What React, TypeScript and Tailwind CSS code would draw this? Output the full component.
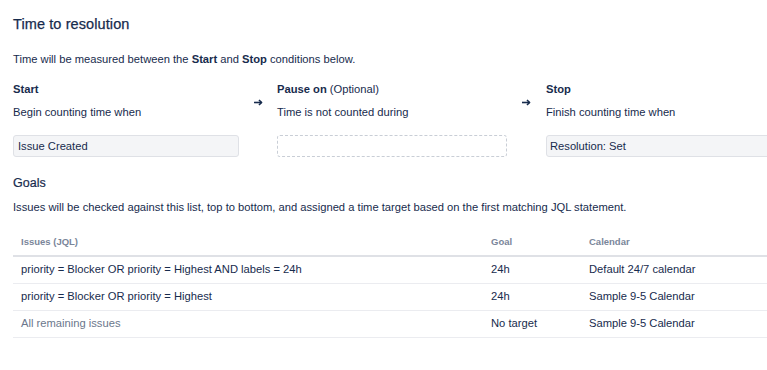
const rows = [
  { jql: "priority = Blocker OR priority = Highest AND labels = 24h", goal: "24h", calendar: "Default 24/7 calendar", muted: false },
  { jql: "priority = Blocker OR priority = Highest", goal: "24h", calendar: "Sample 9-5 Calendar", muted: false },
  { jql: "All remaining issues", goal: "No target", calendar: "Sample 9-5 Calendar", muted: true },
];

function Arrow({ width }: { width: string }) {
  return (
    <div className={`flex h-[39px] shrink-0 items-center justify-center pt-[3px] ${width}`}>
      <svg width="9" height="7" viewBox="0 0 9 7" fill="none" stroke="#172b4d" strokeWidth="1.6">
        <path d="M0 3.5h7.5" />
        <path d="M5 1l2.6 2.5L5 6" strokeLinejoin="round" />
      </svg>
    </div>
  );
}

export default function App() {
  return (
    <div
      className="h-[370px] w-[767px] overflow-hidden bg-white pl-[13px] pt-[14px] text-[11.2px] text-[#172b4d]"
      style={{ fontFamily: '"Liberation Sans", Arial, sans-serif' }}
    >
      <h3 className="h-[20px] text-[14.5px] leading-[20px] tracking-[0.1px] [-webkit-text-stroke:0.25px_#172b4d]">
        Time to resolution
      </h3>

      <p className="mt-[17px] leading-[16px]">
        Time will be measured between the <b>Start</b> and <b>Stop</b> conditions below.
      </p>

      {/* Start / Pause / Stop conditions */}
      <div className="mt-[14px] flex w-[800px]">
        <div className="w-[226px] shrink-0">
          <div className="font-bold leading-[16px]">Start</div>
          <div className="mt-[7px] leading-[16px]">Begin counting time when</div>
          <div className="mt-[15px] flex h-[22px] items-center rounded-[3px] border border-[#dfe1e6] bg-[#f4f5f7] px-[4px]">
            Issue Created
          </div>
        </div>
        <Arrow width="w-[38px]" />
        <div className="w-[230px] shrink-0">
          <div className="leading-[16px]">
            <b>Pause on</b> (Optional)
          </div>
          <div className="mt-[7px] leading-[16px]">Time is not counted during</div>
          <div className="mt-[15px] h-[22px] rounded-[3px] border border-dashed border-[#c9ced6]" />
        </div>
        <Arrow width="w-[39px]" />
        <div className="w-[230px] shrink-0">
          <div className="font-bold leading-[16px]">Stop</div>
          <div className="mt-[7px] leading-[16px]">Finish counting time when</div>
          <div className="mt-[15px] flex h-[22px] items-center rounded-[3px] border border-[#dfe1e6] bg-[#f4f5f7] px-[3px]">
            Resolution: Set
          </div>
        </div>
      </div>

      <h4 className="mt-[17px] text-[12.5px] leading-[18px] [-webkit-text-stroke:0.2px_#172b4d]">Goals</h4>
      <p className="mt-[7px] leading-[16px]">
        Issues will be checked against this list, top to bottom, and assigned a time target based on the first matching JQL statement.
      </p>

      {/* Goals table */}
      <table className="mt-[14px] w-[754px] border-collapse">
        <thead>
          <tr className="border-b-2 border-[#dfe1e6] text-left text-[9.5px] text-[#7a869a]">
            <th className="h-[27px] w-[470px] pl-[8px] font-bold">Issues (JQL)</th>
            <th className="w-[98px] pl-[8px] font-bold">Goal</th>
            <th className="pl-[8px] font-bold">Calendar</th>
          </tr>
        </thead>
        <tbody>
          {rows.map((r) => (
            <tr key={r.jql} className="border-b border-[#ebecf0]">
              <td className={`h-[27px] pl-[8px] ${r.muted ? "text-[#6b778c]" : ""}`}>{r.jql}</td>
              <td className="pl-[8px]">{r.goal}</td>
              <td className="pl-[8px]">{r.calendar}</td>
            </tr>
          ))}
        </tbody>
      </table>
    </div>
  );
}
